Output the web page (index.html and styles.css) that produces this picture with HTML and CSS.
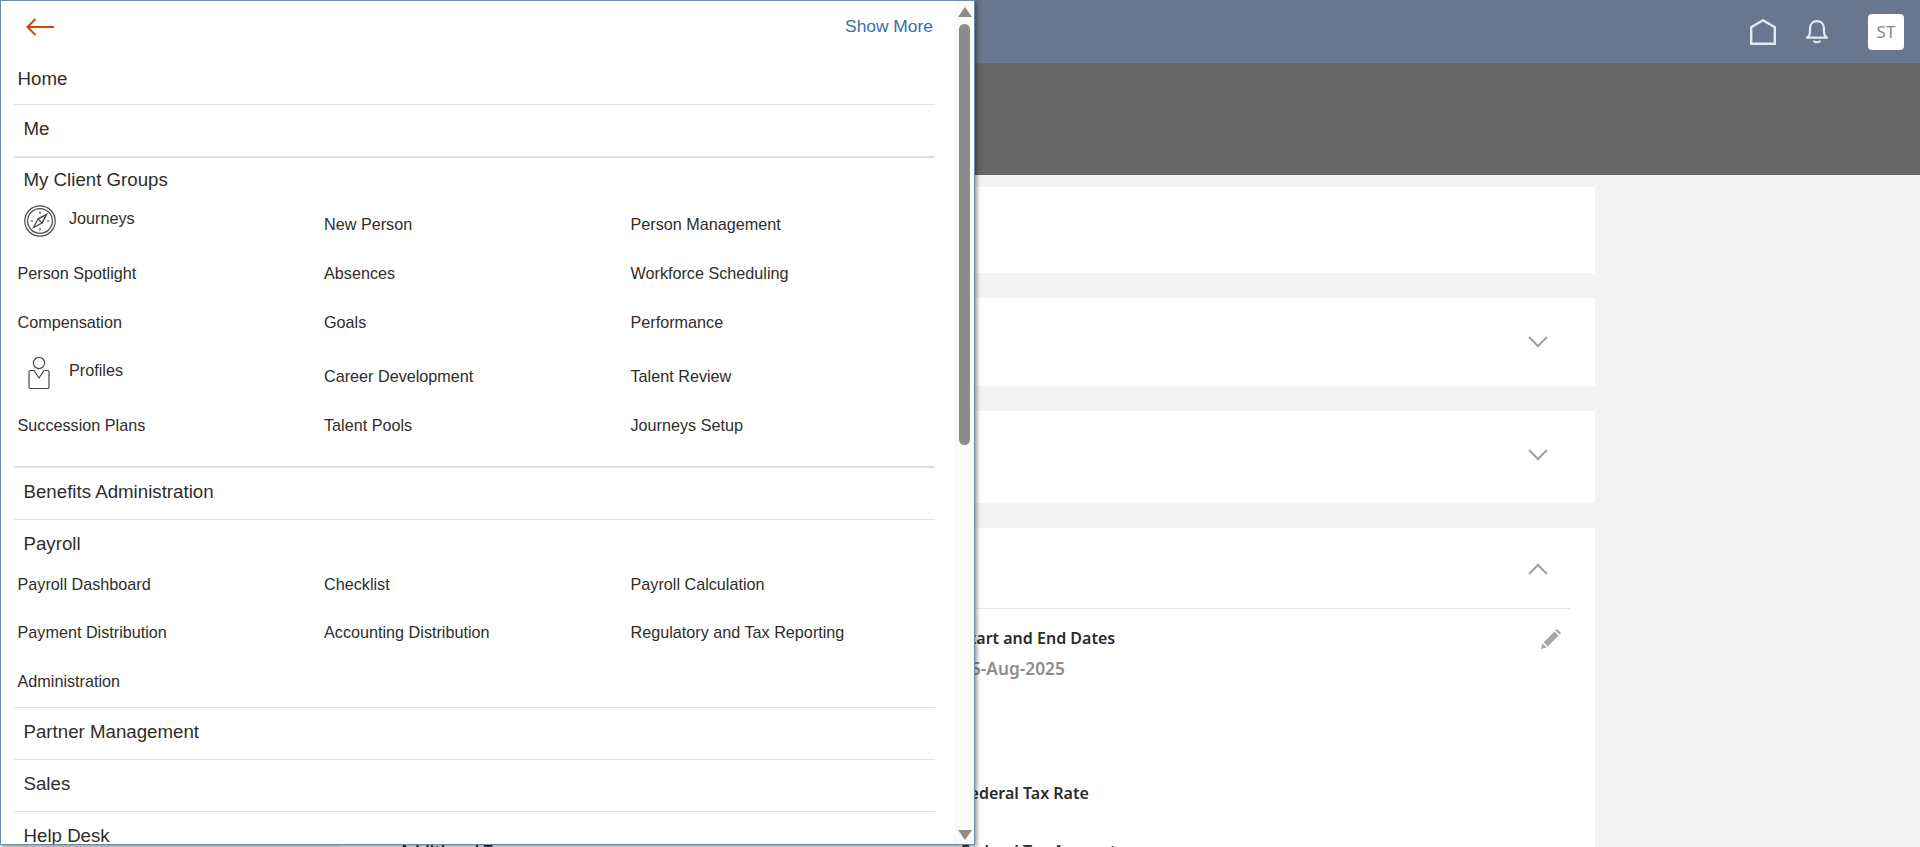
FILE: index.html
```html
<!DOCTYPE html>
<html lang="en">
<head>
    <meta charset="UTF-8">
    <meta name="viewport" content="width=device-width, initial-scale=1.0">
    <title>Navigator</title>
    <link rel="stylesheet" href="styles.css">
</head>
<body>

    <!-- page behind the navigator -->
    <header class="top-bar">
        <svg class="home-icon" viewBox="0 0 26 26" width="26" height="26"><path d="M1.2 24.8V8.2L13 1.3l11.8 6.9v16.6z"/></svg>
        <svg class="bell-icon" viewBox="0 0 22 24" width="22" height="24"><path d="M1 17.6c2.2-1.3 3-2.6 3-5.6V8.5C4 4.2 6.8 1.2 11 1.2s7 3 7 7.3V12c0 3 .8 4.3 3 5.6z"/><path d="M7.6 20.8c1 1.9 5.8 1.9 6.8 0"/></svg>
        <div class="user-badge">ST</div>
    </header>
    <div class="title-band"></div>

    <main class="content">
        <section class="card card-first"></section>
        <section class="card card-second">
            <svg class="chevron" viewBox="0 0 20 12" width="20" height="12"><path d="M1 1l9 9 9-9"/></svg>
        </section>
        <section class="card card-third">
            <svg class="chevron" viewBox="0 0 20 12" width="20" height="12"><path d="M1 1l9 9 9-9"/></svg>
        </section>
        <section class="card card-open">
            <div class="card-head">
                <svg class="chevron" viewBox="0 0 20 12" width="20" height="12"><path d="M1 11l9-9 9 9"/></svg>
            </div>
            <div class="field-grid">
                <div class="field field-dates">
                    <div>
                        <div class="field-label">Start and End Dates</div>
                        <div class="field-value">05-Aug-2025</div>
                    </div>
                    <svg class="pencil" viewBox="0 0 20 20" width="20" height="20"><path d="M0 20l1.4-5.6 4.2 4.2z"/><path d="M2.6 13.2L13.4 2.4l4.2 4.2L6.8 17.4z"/><path d="M14.4 1.4l1-1q.6-.4 1.200 0l3 3q.4.6 0 1.200l-1 1z"/></svg>
                </div>
                <div class="field field-rate">
                    <div class="field-label">Federal Tax Rate</div>
                </div>
                <div class="field field-left">
                    <div class="field-label">Additional Tax</div>
                </div>
                <div class="field">
                    <div class="field-label">Federal Tax Amount</div>
                </div>
            </div>
        </section>
    </main>

    <!-- navigator panel -->
    <aside class="navigator">
        <div class="nav-scroll">
            <div class="nav-toolbar">
                <svg class="back-arrow" viewBox="0 0 28 18" width="28" height="18"><path d="M28 9H1.5M9.5 1l-8 8 8 8"/></svg>
                <a class="show-more" href="#">Show More</a>
            </div>

            <div class="nav-row nav-home">Home</div>
            <div class="nav-row nav-me">Me</div>

            <div class="nav-section nav-section-clients">
                <div class="nav-heading">My Client Groups</div>
                <div class="nav-grid">
                    <a class="nav-item nav-item-icon" href="#">
                        <svg class="item-icon" viewBox="0 0 32 32" width="32" height="32">
                            <circle cx="16" cy="16" r="15.2"/>
                            <circle cx="16" cy="16" r="12.4"/>
                            <path d="M22.5 9.5L18 18l-8.5 4.500L14 14z"/>
                            <path d="M22.5 9.5L14 14l4 4z"/>
                            <path d="M16 6.5V9M16 23v2.5M6.5 16H9M23 16h2.500"/>
                        </svg>
                        <span>Journeys</span>
                    </a>
                    <a class="nav-item" href="#">New Person</a>
                    <a class="nav-item" href="#">Person Management</a>
                    <a class="nav-item" href="#">Person Spotlight</a>
                    <a class="nav-item" href="#">Absences</a>
                    <a class="nav-item" href="#">Workforce Scheduling</a>
                    <a class="nav-item" href="#">Compensation</a>
                    <a class="nav-item" href="#">Goals</a>
                    <a class="nav-item" href="#">Performance</a>
                    <a class="nav-item nav-item-icon nav-item-profiles" href="#">
                        <svg class="item-icon" viewBox="0 0 32 32" width="32" height="32">
                            <circle cx="15" cy="6" r="5.6"/>
                            <path d="M10 13.5H6.500Q5 13.5 5 15v15q0 1.500 1.500 1.500h17q1.500 0 1.500-1.500V15q0-1.500-1.500-1.500H20L15 21z"/>
                        </svg>
                        <span>Profiles</span>
                    </a>
                    <a class="nav-item nav-item-low" href="#">Career Development</a>
                    <a class="nav-item nav-item-low" href="#">Talent Review</a>
                    <a class="nav-item" href="#">Succession Plans</a>
                    <a class="nav-item" href="#">Talent Pools</a>
                    <a class="nav-item" href="#">Journeys Setup</a>
                </div>
            </div>

            <div class="nav-row">Benefits Administration</div>

            <div class="nav-section">
                <div class="nav-heading nav-heading-payroll">Payroll</div>
                <div class="nav-grid nav-grid-payroll">
                    <a class="nav-item" href="#">Payroll Dashboard</a>
                    <a class="nav-item" href="#">Checklist</a>
                    <a class="nav-item" href="#">Payroll Calculation</a>
                    <a class="nav-item" href="#">Payment Distribution</a>
                    <a class="nav-item" href="#">Accounting Distribution</a>
                    <a class="nav-item" href="#">Regulatory and Tax Reporting</a>
                    <a class="nav-item" href="#">Administration</a>
                </div>
            </div>

            <div class="nav-row">Partner Management</div>
            <div class="nav-row">Sales</div>
            <div class="nav-row">Help Desk</div>
        </div>

        <div class="scrollbar">
            <span class="scroll-arrow scroll-up"></span>
            <span class="scroll-thumb"></span>
            <span class="scroll-arrow scroll-down"></span>
        </div>
    </aside>

</body>
</html>
```

FILE: styles.css
```css
* {
    box-sizing: border-box;
}

html,
body {
    height: 847px;
}

body {
    margin: 0;
    overflow: hidden;
    background-color: #f3f3f3;
    font-family: "Liberation Sans", Arial, sans-serif;
    color: #312d2a;
}

a {
    color: inherit;
    text-decoration: none;
}

/* page behind the panel */
.top-bar {
    height: 63px;
    background-color: #68778f;
    display: flex;
    justify-content: flex-end;
    align-items: center;
    padding-right: 16px;
}

.home-icon,
.bell-icon {
    fill: none;
    stroke: #e4e9f1;
    stroke-width: 2.4;
}

.bell-icon {
    stroke-width: 2.2;
    margin-left: 30px;
}

.user-badge {
    width: 36px;
    height: 36px;
    margin-left: 40px;
    background: #fff;
    border-radius: 4px;
    color: #8a8886;
    font-family: "Noto Sans", sans-serif;
    font-size: 17px;
    line-height: 36px;
    text-align: center;
}

.title-band {
    height: 112px;
    background-color: #666;
}

.content {
    margin-left: 340px;
    width: 1255px;
    padding-top: 12px;
    display: flex;
    flex-direction: column;
    gap: 25px;
    font-family: "Noto Sans", sans-serif;
}

.card {
    background: #fff;
    padding: 0 25px;
    display: flex;
    justify-content: flex-end;
    align-items: center;
}

.card-first {
    height: 86px;
}

.card-second {
    height: 88px;
}

.card-third {
    height: 92px;
    padding-bottom: 4px;
}

.card-open {
    display: block;
}

.card-head {
    height: 81px;
    border-bottom: 1px solid #dfe5ed;
    display: flex;
    justify-content: flex-end;
    align-items: center;
    padding-top: 2px;
}

.chevron {
    margin-right: 22px;
    fill: none;
    stroke: #a0a0a0;
    stroke-width: 2;
}

.field-grid {
    display: grid;
    grid-template-columns: 562px 1fr;
    padding: 18px 0 0 34px;
}

.field {
    font-size: 16px;
    line-height: 22px;
}

.field-dates,
.field-rate {
    grid-column: 2;
}

.field-dates {
    height: 155px;
    display: flex;
    justify-content: space-between;
    align-items: flex-start;
    padding-right: 9px;
}

.field-rate {
    height: 58px;
}

.field-label {
    font-weight: 600;
    color: #2b2b2b;
}

.field-value {
    margin-top: 9px;
    font-size: 17.3px;
    font-weight: 600;
    color: #8f8c89;
}

.pencil {
    margin-top: 2px;
    fill: #a6a6a6;
}

/* navigator */
.navigator {
    position: absolute;
    top: 0;
    left: 0;
    width: 975px;
    height: 845px;
    display: flex;
    background: #fff;
    border: 1px solid #6f8ba8;
    box-shadow: 2px 2px 4px rgba(0, 0, 0, 0.4);
}

.nav-scroll {
    flex-grow: 1;
    overflow: hidden;
    padding-left: 13px;
}

.nav-toolbar {
    width: 921px;
    height: 51px;
    display: flex;
    justify-content: space-between;
    padding: 17px 2px 0 12px;
}

.back-arrow {
    fill: none;
    stroke: #c9490f;
    stroke-width: 2;
}

.show-more {
    margin-top: -2px;
    font-size: 17.4px;
    line-height: 20px;
    color: #3b6ea8;
}

.nav-row {
    width: 921px;
    height: 52px;
    padding: 13px 0 0 9.5px;
    border-bottom: 1px solid #d9e1e9;
    font-size: 18.7px;
    line-height: 21px;
}

.nav-home {
    height: 53px;
    padding: 16px 0 0 3.5px;
}

.nav-me {
    height: 53px;
    border-bottom-width: 2px;
}

.nav-section {
    width: 921px;
    border-bottom: 1px solid #d9e1e9;
}

.nav-section-clients {
    padding-bottom: 16px;
    border-bottom-width: 2px;
}

.nav-heading {
    height: 42px;
    padding: 11px 0 0 9.5px;
    font-size: 18.7px;
    line-height: 21px;
}

.nav-heading-payroll {
    height: 40px;
    padding-top: 13px;
}

.nav-grid {
    display: grid;
    grid-template-columns: repeat(3, 306.5px);
    padding-left: 3.5px;
}

.nav-item {
    padding: 15px 0;
    font-size: 16.2px;
    line-height: 19px;
}

.nav-item-low {
    padding-top: 20px;
}

.nav-grid-payroll .nav-item:nth-child(n+4) {
    padding: 14px 0 16px;
}

.nav-item-icon {
    display: flex;
    align-items: flex-start;
    gap: 13px;
    padding: 5px 0 0 6.5px;
}

.nav-item-icon span {
    margin-top: 4px;
}

.nav-item-profiles {
    padding-top: 10px;
}

.item-icon {
    flex-shrink: 0;
    fill: none;
    stroke: #4a4846;
    stroke-width: 1.2;
}

/* scrollbar is drawn since the panel content is cut off */
.scrollbar {
    width: 20px;
    flex-shrink: 0;
    background: #fafafa;
    padding: 6px 3px 4px 4px;
    display: flex;
    flex-direction: column;
    align-items: center;
}

.scroll-arrow {
    width: 0;
    height: 0;
    border-left: 7px solid transparent;
    border-right: 7px solid transparent;
}

.scroll-up {
    border-bottom: 10px solid #8c8c8c;
}

.scroll-down {
    margin-top: auto;
    border-top: 10px solid #8c8c8c;
}

.scroll-thumb {
    width: 11px;
    height: 421px;
    margin-top: 7px;
    background: #8c8c8c;
    border-radius: 6px;
}
```
